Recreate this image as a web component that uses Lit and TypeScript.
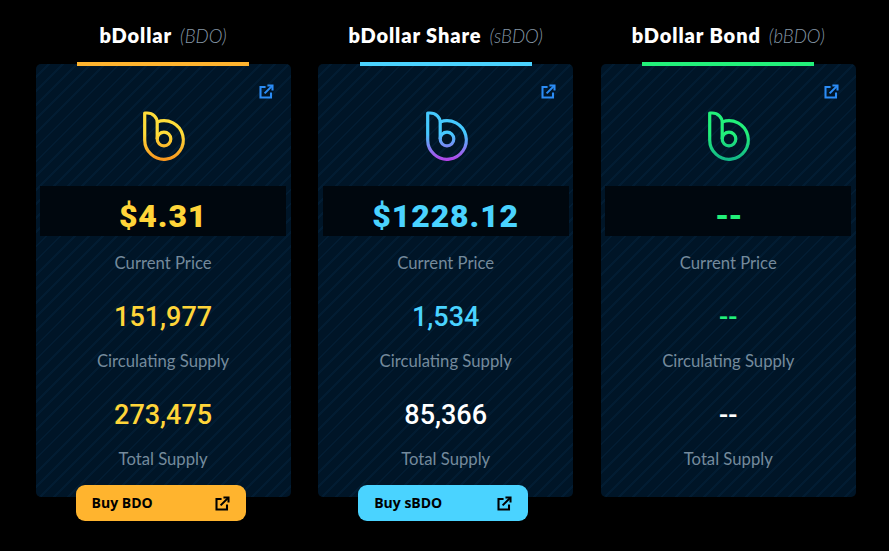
import { LitElement, html, css, svg } from "lit";
import { customElement } from "lit/decorators.js";

interface Card {
  id: string; name: string; sym: string; accent: string; price: string; circ: string; total: string;
  totalWhite: boolean; from: string; to: string; buy?: string; valueColor: string;
}
const cards: Card[] = [
  { id: "a", name: "bDollar", sym: "(BDO)", accent: "#ffb42e", valueColor: "#ffd539", price: "$4.31", circ: "151,977", total: "273,475", totalWhite: false, from: "#ffdd3a", to: "#f7941d", buy: "Buy BDO" },
  { id: "b", name: "bDollar Share", sym: "(sBDO)", accent: "#4ad3ff", valueColor: "#4ad3ff", price: "$1228.12", circ: "1,534", total: "85,366", totalWhite: true, from: "#45c9ff", to: "#b63fe8", buy: "Buy sBDO" },
  { id: "c", name: "bDollar Bond", sym: "(bBDO)", accent: "#22f07a", valueColor: "#22f07a", price: "--", circ: "--", total: "--", totalWhite: true, from: "#22f07a", to: "#12b488" },
];

const ext = (w: number, c: string) => html`<svg width=${w} height=${w} viewBox="0 0 16 16" fill="none" stroke=${c} stroke-width="2.2">
  <path d="M7 3.2H1.6v11.2h11.2V9"/><path d="M6 10 14 2"/><path d="M9 0.5h6.5V7h-2.2V2.7H9z" fill=${c} stroke="none"/></svg>`;

@customElement("app-root")
export class AppRoot extends LitElement {
  static styles = css`
    :host { display: block; width: 889px; height: 551px; background: #000; overflow: hidden; font-family: "Lato", sans-serif; }
    .grid { display: grid; grid-template-columns: repeat(3, 255px); column-gap: 27.6px; padding-left: 35.6px; }
    .col { display: flex; flex-direction: column; align-items: center; width: 255px; }
    .title { height: 62px; box-sizing: border-box; padding-top: 22px; white-space: nowrap; line-height: 26px; display: flex; align-items: baseline; gap: 8px; }
    .name { color: #fff; font: 800 20px/26px "Lato", sans-serif; letter-spacing: 0.9px; }
    .sym { color: #8496a5; font: italic 300 18.6px/26px "Lato", sans-serif; }
    .bar { width: 172px; height: 4px; z-index: 1; margin-bottom: -2px; }
    .card { position: relative; box-sizing: border-box; width: 255px; height: 433px; border-radius: 5px; display: flex; flex-direction: column; align-items: center;
      background: repeating-linear-gradient(135deg, #001527 0 8px, #021c32 8px 10px); }
    .ext { align-self: flex-end; height: 16px; margin: 19px 17px 0 0; }
    .logo { display: block; margin-top: 8px; height: 56px; }
    .band { box-sizing: border-box; width: 246px; height: 50px; margin-top: 23px; padding-top: 5px; background: #00070e; text-align: center; font: 900 32px/50px "Roboto", sans-serif; letter-spacing: 0.9px; }
    .band.empty { letter-spacing: -1px; }
    .label { color: #748a9c; font-size: 16.7px; line-height: 20px; margin-top: 17px; }
    .value { font: 500 27px/34px "Roboto", sans-serif; margin-top: 27px; }
    .value + .label { margin-top: 17px; }
    .buy { position: absolute; left: 40px; top: 421px; box-sizing: border-box; width: 170px; height: 36px; border-radius: 9px; padding: 0 16px; display: flex; align-items: center; justify-content: space-between;
      color: #000; font: 700 14px/36px "Open Sans", sans-serif; }
  `;

  logo(c: Card) {
    return html`<svg class="logo" width="50" height="56" viewBox="0 0 50 56" fill="none">
      ${svg`<defs><linearGradient id="g${c.id}" gradientUnits="userSpaceOnUse" x1="25" y1="4" x2="25" y2="54"><stop offset="0" stop-color=${c.from}/><stop offset="0.45" stop-color=${c.from}/><stop offset="1" stop-color=${c.to}/></linearGradient></defs>
      <g stroke="url(#g${c.id})" stroke-width="3.2" stroke-linejoin="round">
      <path d="M6.7 33V6H9C15 6 19.2 10.5 19.2 15.5V32"/>
      <path d="M19.2 14.9A19.3 19.3 0 1 1 6.7 33"/>
      <circle cx="26" cy="32" r="6.8"/></g>`}
    </svg>`;
  }

  render() {
    return html`<div class="grid">${cards.map(c => html`
      <div class="col">
        <div class="title"><span class="name">${c.name}</span><span class="sym">${c.sym}</span></div>
        <div class="bar" style="background:${c.accent}"></div>
        <div class="card">
          <div class="ext">${ext(15, "#2b8cf5")}</div>
          ${this.logo(c)}
          <div class="band ${c.price === "--" ? "empty" : ""}" style="color:${c.valueColor}">${c.price}</div>
          <div class="label">Current Price</div>
          <div class="value" style="color:${c.valueColor}">${c.circ}</div>
          <div class="label">Circulating Supply</div>
          <div class="value" style="color:${c.totalWhite ? "#fff" : c.valueColor}">${c.total}</div>
          <div class="label">Total Supply</div>
          ${c.buy ? html`<div class="buy" style="background:${c.accent}"><span>${c.buy}</span>${ext(15, "#000")}</div>` : ""}
        </div>
      </div>`)}</div>`;
  }
}
